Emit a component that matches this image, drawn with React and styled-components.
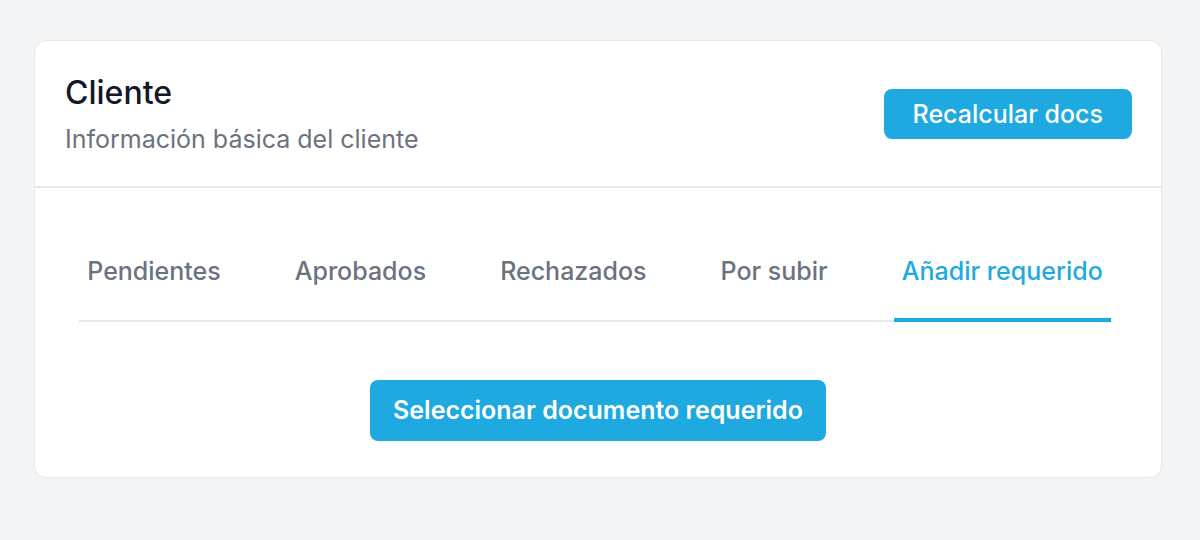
import React, { useState } from "react";
import styled, { createGlobalStyle } from "styled-components";

const GlobalStyle = createGlobalStyle`
  body {
    margin: 0;
    background: #f3f4f6;
    font-family: Inter, "Noto Sans", sans-serif;
  }
`;

const Page = styled.div`
  padding: 40px 38px 0 34px;
`;

const Card = styled.section`
  background: #ffffff;
  border: 1px solid #e5e7eb;
  border-radius: 12px;
`;

const Header = styled.header`
  display: flex;
  align-items: center;
  justify-content: space-between;
  padding: 32px 29px 32px 30px;
  border-bottom: 2px solid #e5e7eb;
`;

const Title = styled.h2`
  margin: 0;
  font-size: 32px;
  font-weight: 500;
  line-height: 40px;
  color: #111827;
`;

const Subtitle = styled.p`
  margin: 11px 0 0;
  font-size: 25px;
  line-height: 30px;
  color: #6b7280;
`;

const Button = styled.button`
  border: 0;
  border-radius: 8px;
  background: #1eaae1;
  color: #ffffff;
  font-family: inherit;
  font-size: 25px;
  font-weight: ${(p) => (p.large ? 600 : 500)};
  padding: ${(p) => (p.large ? "15px 23px 16px" : "10px 29px")};
  line-height: 30px;
  cursor: pointer;
`;

const Body = styled.div`
  display: flex;
  flex-direction: column;
  align-items: center;
  padding: 36px 30px;
`;

const TabList = styled.nav`
  display: flex;
  gap: 58px;
  border-bottom: 2px solid #e5e7eb;
  margin: 0 6px 58px 0;
`;

const Tab = styled.button`
  border: 0;
  background: none;
  font-family: inherit;
  font-size: 25px;
  font-weight: 500;
  line-height: 30px;
  padding: 32px 8px 32px;
  margin-bottom: -2px;
  color: ${(p) => (p.active ? "#1eaae1" : "#6b7280")};
  border-bottom: 4px solid ${(p) => (p.active ? "#1eaae1" : "transparent")};
  cursor: pointer;
`;

const tabs = ["Pendientes", "Aprobados", "Rechazados", "Por subir", "Añadir requerido"];

export default function App() {
  const [active, setActive] = useState(4);
  return (
    <>
      <GlobalStyle />
      <Page>
        <Card>
          <Header>
            <div>
              <Title>Cliente</Title>
              <Subtitle>Información básica del cliente</Subtitle>
            </div>
            <Button>Recalcular docs</Button>
          </Header>
          <Body>
            <TabList>
              {tabs.map((t, i) => (
                <Tab key={t} active={i === active} onClick={() => setActive(i)}>
                  {t}
                </Tab>
              ))}
            </TabList>
            <Button large>Seleccionar documento requerido</Button>
          </Body>
        </Card>
      </Page>
    </>
  );
}
